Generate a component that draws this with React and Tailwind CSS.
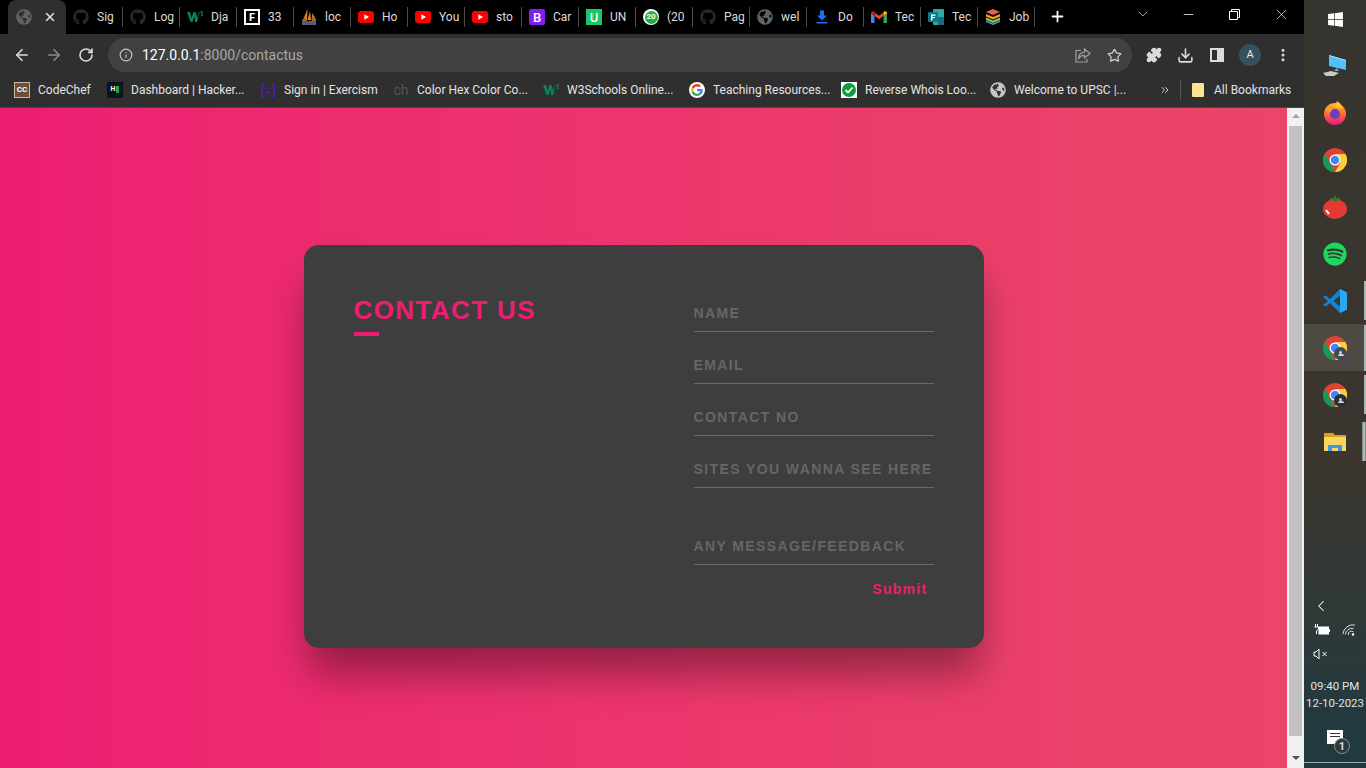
import { ArrowLeft, ArrowRight, RotateCw, Info, Star, Download, Puzzle, MoreVertical, Plus, X, ChevronDown, Minus, ChevronLeft, ChevronsRight } from "lucide-react";
import { FaGithub, FaGlobeAmericas, FaSpotify, FaWindows } from "react-icons/fa";

const ui = { fontFamily: 'Roboto, "Open Sans", sans-serif' };

function Globe({ size = 16, color = "#5f6368" }) {
    return <FaGlobeAmericas size={size} color={color} />;
}

function Github() {
    return <FaGithub size={16} color="#24292e" />;
}

function Yt() {
    return (
        <svg width="16" height="12" viewBox="0 0 16 12">
            <rect width="16" height="12" rx="3" fill="#f00" />
            <path d="M6.3 3.3 11 6l-4.7 2.7z" fill="#fff" />
        </svg>
    );
}

function Square({ bg, color = "#fff", children, className = "" }) {
    return (
        <span className={`flex h-4 w-4 items-center justify-center text-[13px] font-medium leading-none ${className}`} style={{ background: bg, color }}>
            {children}
        </span>
    );
}

function W3({ color = "#04aa6d" }) {
    return (
        <svg width="16" height="12" viewBox="0 0 16 12">
            <path d="M0 1h3l1.5 6L6.5 1h2l2 6L12 1h.8L10 11H8L7.500 5 5.500 11h-2z" fill={color} />
            <path d="M13 0.500h3v1l-1 1.200c.8.300 1 .8 1 1.300 0 1-1 1.500-2.500 1.200v-.8c1 .2 1.500 0 1.500-.5 0-.4-.5-.6-1-.6v-.7l1-1.100h-2z" fill={color} />
        </svg>
    );
}

function Pyramid() {
    return (
        <svg width="16" height="16" viewBox="0 0 16 16">
            <path d="M6.500 0 2 11h4zM9 2 6.500 11h3.500zM11.500 4 10.500 11H15z" fill="#e08a2c" />
            <path d="M4 8 0.500 12H6zM11 7l4.500 5H11z" fill="#a8651f" />
            <rect x="1" y="12" width="14" height="4" fill="#5a5a78" />
        </svg>
    );
}

function Gmail() {
    return (
        <svg width="16" height="12" viewBox="0 0 16 12">
            <path d="M0 2v9a1 1 0 0 0 1 1h2.500V5z" fill="#4285f4" />
            <path d="M16 2v9a1 1 0 0 1-1 1h-2.500V5z" fill="#34a853" />
            <path d="M3.500 5 8 8.300 12.500 5V1.500L8 4.800 3.500 1.500z" fill="#ea4335" />
            <path d="M0 2c0-1.500 1.800-2.400 3-1.500l.5.4V5L0 2.500z" fill="#c5221f" />
            <path d="M16 2c0-1.500-1.800-2.400-3-1.500l-.5.4V5L16 2.500z" fill="#fbbc04" />
        </svg>
    );
}

function Teams() {
    return (
        <svg width="16" height="16" viewBox="0 0 16 16">
            <rect x="5" y="0" width="11" height="16" rx="1" fill="#31a8a8" />
            <rect x="10" y="8" width="6" height="8" fill="#1b6f78" />
            <rect x="0" y="3" width="10" height="10" rx="1" fill="#0e7a86" />
            <path d="M3 5.500h4.500v1.200H4.500v1.200h2.500v1.200H4.500v2.400H3z" fill="#fff" />
        </svg>
    );
}

function Stack() {
    return (
        <svg width="16" height="16" viewBox="0 0 16 16">
            <path d="M8 0 15 3 8 6 1 3z" fill="#e8604c" />
            <path d="M1 5l7 3 7-3v2.500L8 10.500 1 7.500z" fill="#e9a23b" />
            <path d="M1 8.500l7 3 7-3V11l-7 3-7-3z" fill="#8bc34a" />
            <path d="M1 11.500l7 3 7-3V13l-7 3-7-3z" fill="#4aa3df" />
        </svg>
    );
}

function GoogleG({ size = 16 }) {
    return (
        <span className="flex items-center justify-center rounded-full bg-white" style={{ width: size, height: size }}>
            <svg width="12" height="12" viewBox="0 0 48 48">
                <path fill="#ea4335" d="M24 9.500c3.500 0 6.700 1.300 9.100 3.500l6.800-6.800C35.800 2.400 30.200 0 24 0 14.600 0 6.500 5.400 2.600 13.200l7.900 6.200C12.400 13.700 17.700 9.500 24 9.500z" />
                <path fill="#4285f4" d="M46.900 24.500c0-1.600-.1-3.100-.4-4.500H24v9h12.900c-.6 3-2.200 5.500-4.700 7.200l7.700 6c4.500-4.200 7-10.300 7-17.700z" />
                <path fill="#fbbc05" d="M10.500 28.600A14.500 14.500 0 0 1 9.500 24c0-1.600.3-3.200.8-4.600l-7.900-6.200A24 24 0 0 0 0 24c0 3.900.9 7.500 2.600 10.800z" />
                <path fill="#34a853" d="M24 48c6.500 0 11.900-2.100 15.900-5.800l-7.700-6c-2.200 1.500-4.900 2.300-8.200 2.300-6.300 0-11.600-4.200-13.500-9.900l-8 6.200C6.500 42.600 14.600 48 24 48z" />
            </svg>
        </span>
    );
}

function Chrome({ badge }) {
    return (
        <span className="relative flex h-6 w-6">
            <svg width="24" height="24" viewBox="0 0 48 48">
                <circle cx="24" cy="24" r="24" fill="#db4437" />
                <path d="M24 48A24 24 0 0 1 3.200 12L13.500 30 24 48z" fill="#0f9d58" />
                <path d="M24 48 35 29 24 12h20.800A24 24 0 0 1 24 48z" fill="#ffcd40" />
                <circle cx="24" cy="24" r="11" fill="#fff" />
                <circle cx="24" cy="24" r="8.500" fill="#4285f4" />
            </svg>
            {badge && (
                <span className={`absolute bottom-0 right-0 flex h-[13px] w-[13px] flex-col items-center justify-center rounded-full ${badge === "a" ? "bg-[#3f4b59]" : "bg-[#25303b]"}`}>
                    <span className="h-[3px] w-[3px] rounded-full bg-[#d5d5d5]" />
                    <span className="h-[2px] w-[6px] rounded-t-full bg-[#d5d5d5]" />
                </span>
            )}
        </span>
    );
}

const tabs = [
    { icon: <Github />, label: "Sig" },
    { icon: <Github />, label: "Log" },
    { icon: <W3 color="#0b8457" />, label: "Dja" },
    { icon: <span className="flex h-4 w-4 items-center justify-center border-2 border-white bg-black text-[11px] font-bold leading-none text-white">F</span>, label: "33" },
    { icon: <Pyramid />, label: "loc" },
    { icon: <Yt />, label: "Ho" },
    { icon: <Yt />, label: "You" },
    { icon: <Yt />, label: "sto" },
    { icon: <Square bg="#7f1ff0" className="rounded-[2px]">B</Square>, label: "Car" },
    { icon: <Square bg="#17c964">U</Square>, label: "UN" },
    {
        icon: (
            <span className="relative flex h-4 w-4 items-center justify-center rounded-full bg-white">
                <span className="flex h-[13px] w-[13px] items-center justify-center rounded-full bg-[#1fb141] text-[8px] font-bold text-white">20</span>
            </span>
        ),
        label: "(20",
    },
    { icon: <Github />, label: "Pag" },
    { icon: <Globe />, label: "wel" },
    {
        icon: (
            <svg width="16" height="16" viewBox="0 0 16 16">
                <path d="M6 1.500h4v5h3L8 11.500 3 6.500h3zM2.500 13h11v1.500h-11z" fill="#1a73e8" />
            </svg>
        ),
        label: "Do",
    },
    { icon: <Gmail />, label: "Tec" },
    { icon: <Teams />, label: "Tec" },
    { icon: <Stack />, label: "Job" },
];

const bookmarks = [
    { w: "w-[93px]", label: "CodeChef", icon: <span className="flex h-4 w-4 items-center justify-center border border-[#c9b9a6] bg-[#6b4f3a] text-[8px] font-bold text-white">CC</span> },
    { w: "w-[153px]", label: "Dashboard | Hacker...", icon: <span className="flex h-4 w-4 items-center justify-center gap-px bg-[#0e141e]"><span className="text-[7px] font-bold text-white">H</span><span className="h-[7px] w-[3px] bg-[#1ba94c]" /></span> },
    {
        w: "w-[133px]", label: "Sign in | Exercism",
        icon: (
            <svg width="16" height="16" viewBox="0 0 16 16" fill="none" stroke="#5b16d0" strokeWidth="1.300">
                <path d="M4 1.500H3c-1 0-1 1-1 2v2.500L.8 8 2 10v2.500c0 1 0 2 1 2h1M12 1.500h1c1 0 1 1 1 2v2.500L15.200 8 14 10v2.500c0 1 0 2-1 2h-1" />
                <path d="M5.500 6.500h1M9.500 6.500h1M6 10c1.200 1 2.800 1 4 0" />
            </svg>
        ),
    },
    { w: "w-[150px]", label: "Color Hex Color Co...", icon: <span className="flex h-4 w-4 items-center justify-center text-[14px] leading-none text-[#555]">ch</span> },
    { w: "w-[146px]", label: "W3Schools Online...", icon: <W3 color="#0b8457" /> },
    { w: "w-[152px]", label: "Teaching Resources...", icon: <GoogleG /> },
    {
        w: "w-[149px]", label: "Reverse Whois Loo...",
        icon: (
            <span className="flex h-4 w-4 items-center justify-center bg-white">
                <svg width="14" height="14" viewBox="0 0 14 14">
                    <circle cx="7" cy="7" r="7" fill="#0f9d3a" />
                    <path d="M3.500 7 6 9.500l4.500-5" stroke="#fff" strokeWidth="1.800" fill="none" />
                </svg>
            </span>
        ),
    },
    { w: "w-[151px]", label: "Welcome to UPSC |...", icon: <Globe color="#c4c7c5" /> },
];

const fields = ["NAME", "EMAIL", "CONTACT NO", "SITES YOU WANNA SEE HERE"];

function TabStrip() {
    return (
        <div className="flex h-[34px] items-stretch bg-black pl-2 text-[12px] text-[#dcdcdc]">
            <div className="flex w-[58px] items-center rounded-t-[8px] bg-[#2f2f2f] pl-2">
                <Globe />
                <X size={14} strokeWidth={2.5} className="ml-[11px] text-[#e4e4e4]" />
            </div>
            {tabs.map((t, i) => (
                <div key={i} className="flex w-[57px] items-center pl-[7px]">
                    <span className="flex w-4 shrink-0 justify-center">{t.icon}</span>
                    <span className="ml-2 w-[17px] whitespace-nowrap">{t.label}</span>
                    <span className="ml-[8px] h-5 w-px bg-[#4a4a4a]" />
                </div>
            ))}
            <Plus size={17} strokeWidth={2.5} className="ml-[14px] mt-[8px] text-white" />
            <ChevronDown size={16} strokeWidth={1.2} className="ml-[69px] mt-[6px] text-[#d0d0d0]" />
            <Minus size={15} strokeWidth={1.2} className="ml-[30px] mt-[7px] text-white" />
            <svg width="11" height="11" viewBox="0 0 11 11" className="ml-[33px] mt-[9px] text-white">
                <path d="M.5 2.500h8v8h-8zM2.500 2.500V.5h8v8h-2" fill="none" stroke="currentColor" />
            </svg>
            <X size={17} strokeWidth={1} className="ml-[33px] mt-[6px] text-white" />
        </div>
    );
}

function Toolbar() {
    return (
        <div className="flex h-[38px] items-end bg-[#2f2f2f] pl-[13px] text-[#dcdcdc]">
            <div className="flex h-[34px] items-center">
                <ArrowLeft size={18} strokeWidth={2.2} />
                <ArrowRight size={18} strokeWidth={2.2} className="ml-[14px] text-[#8a8a8a]" />
                <RotateCw size={16} strokeWidth={2.4} className="ml-[15px]" />
            </div>
            <div className="ml-[14px] flex h-[34px] w-[1024px] items-center rounded-full bg-[#414141] pl-[11px] text-[14px]">
                <Info size={14} className="text-[#c8c8c8]" />
                <span className="ml-[9px] leading-none">
                    <span className="text-white">127.0.0.1</span>
                    <span className="text-[#a8a8a8]">:8000/contactus</span>
                </span>
                <svg width="16" height="15" viewBox="0 0 16 15" fill="none" stroke="#a0a0a0" strokeWidth="1.200" className="ml-auto">
                    <path d="M6 2.500H1v11.500h11v-3" />
                    <path d="M9.500 1 15 5.500 9.500 10V7.300C6.500 7.300 4.500 8.500 3.500 11c0-4 2.500-6.500 6-6.800z" />
                </svg>
                <Star size={15} className="ml-[16px] mr-[10px] text-[#cfcfcf]" />
            </div>
            <div className="flex h-[34px] items-center">
                <Puzzle size={16} fill="#dcdcdc" className="ml-[14px]" />
                <Download size={17} strokeWidth={2.2} className="ml-[15px]" />
                <span className="ml-[16px] flex h-[14px] w-[14px] justify-end border-2 border-[#dcdcdc]">
                    <span className="h-full w-[5px] bg-[#dcdcdc]" />
                </span>
                <span className="ml-[15px] flex h-[22px] w-[22px] items-center justify-center rounded-full bg-[#37505f] text-[11px] text-[#e8e8e8]">A</span>
                <MoreVertical size={16} strokeWidth={2.5} className="ml-[14px]" />
            </div>
        </div>
    );
}

function BookmarkBar() {
    return (
        <div className="flex h-[36px] items-center border-b border-[#5a3a48] bg-[#2f2f2f] pl-[14px] text-[12px] text-[#e3e3e3]">
            {bookmarks.map((b) => (
                <div key={b.label} className={`flex items-center ${b.w}`}>
                    <span className="flex w-4 shrink-0 justify-center">{b.icon}</span>
                    <span className="ml-2 whitespace-nowrap">{b.label}</span>
                </div>
            ))}
            <ChevronsRight size={12} className="ml-[18px] text-[#cfcfcf]" />
            <span className="ml-[9px] h-5 w-px bg-[#555]" />
            <span className="ml-[11px] h-[14px] w-3 rounded-[1px] bg-[#fde293]" />
            <span className="ml-[10px] whitespace-nowrap">All Bookmarks</span>
        </div>
    );
}

function Scrollbar() {
    return (
        <div className="flex w-[17px] shrink-0 flex-col items-center bg-[#f1f1f1] pt-[6px]">
            <span className="h-0 w-0 border-x-4 border-b-4 border-x-transparent border-b-[#a3a3a3]" />
            <span className="mt-[8px] h-[610px] w-[13px] bg-[#c1c1c1]" />
            <span className="mt-[20px] h-0 w-0 border-x-4 border-t-4 border-x-transparent border-t-[#505050]" />
        </div>
    );
}

function ContactCard() {
    return (
        <div className="h-[403px] w-[680px] rounded-[15px] bg-[#3e3e3e] p-[50px] shadow-[0_30px_40px_-5px_rgba(0,0,0,0.38)]" style={{ fontFamily: '"Liberation Sans", Arial, sans-serif' }}>
            <div className="flex justify-between">
                <div>
                    <h2 className="text-[26px] font-bold leading-[30px] tracking-[1.4px] text-[#ee1d72]">CONTACT US</h2>
                    <div className="mt-[7px] h-[4px] w-[25px] bg-[#ee1d72]" />
                </div>
                <form className="w-[240px]">
                    {fields.map((f) => (
                        <input
                            key={f}
                            placeholder={f}
                            className="mb-[15px] block h-[37px] w-full border-b border-[#696969] bg-transparent pb-px text-[14px] font-bold tracking-[1.4px] text-white outline-none placeholder:text-[#666]"
                        />
                    ))}
                    <input
                        placeholder="ANY MESSAGE/FEEDBACK"
                        className="mt-[40px] block h-[37px] w-full border-b border-[#696969] bg-transparent pb-px text-[14px] font-bold tracking-[1.4px] text-white outline-none placeholder:text-[#666]"
                    />
                    <div className="mt-[15px] flex justify-end pr-[6px]">
                        <button type="button" className="text-[14px] font-bold leading-[18px] tracking-[1.3px] text-[#ee1d72]">Submit</button>
                    </div>
                </form>
            </div>
        </div>
    );
}

function TaskIcon({ children, active, bar }) {
    return (
        <div className={`relative flex h-[47px] items-center justify-center ${active ? "bg-white/10" : ""}`}>
            {children}
            {bar === "full" && <span className="absolute bottom-0 right-0 top-px w-[2px] bg-[#a9bbae]" />}
            {bar === "short" && <span className="absolute bottom-[4px] right-0 top-[4px] w-[2px] bg-[#a9bbae]" />}
            {bar === "double" && <span className="absolute bottom-[4px] right-0 top-[4px] w-[4px] border-x border-[#7f8f85] bg-[#a9bbae]" />}
        </div>
    );
}

function Taskbar() {
    return (
        <div className="flex w-[62px] shrink-0 flex-col bg-gradient-to-b from-[#36342f] via-[#3b362e] via-60% to-[#1e3a40] text-white" style={ui}>
            <div className="flex h-[42px] items-center justify-center pb-[4px]">
                <FaWindows size={17} />
            </div>
            <TaskIcon>
                <svg width="24" height="22" viewBox="0 0 24 22">
                    <path d="M6 0l17 5v10L6 11z" fill="#4fc3f7" />
                    <path d="M6 0l17 5v1L6 1z" fill="#9be3ff" />
                    <path d="M14 13l2 3-5 0z" fill="#8fa3ad" />
                    <path d="M0 18l8-2 8 2-5 3H3z" fill="#c9c9c9" />
                </svg>
            </TaskIcon>
            <TaskIcon>
                <svg width="24" height="24" viewBox="0 0 24 24">
                    <defs>
                        <linearGradient id="ff" x1="0" y1="0" x2="0" y2="1">
                            <stop offset="0" stopColor="#ffbd2e" />
                            <stop offset="0.5" stopColor="#ff6a2b" />
                            <stop offset="1" stopColor="#e31587" />
                        </linearGradient>
                    </defs>
                    <circle cx="12" cy="13" r="11" fill="url(#ff)" />
                    <path d="M14 0c4 3 5 5 5 8l-7-2z" fill="#ffc83a" />
                    <circle cx="12" cy="13" r="5" fill="#6a3fc0" />
                    <path d="M2 8c2-3 5-4 7-3-1 2-2 3-1 6-3 0-5-1-6-3z" fill="#ff9a2b" />
                </svg>
            </TaskIcon>
            <TaskIcon><Chrome /></TaskIcon>
            <TaskIcon>
                <svg width="24" height="24" viewBox="0 0 24 24">
                    <ellipse cx="12" cy="14" rx="12" ry="10" fill="#e53935" />
                    <path d="M12 1v4M7 4h10l-5 2z" stroke="#2e7d32" strokeWidth="1.500" fill="#2e7d32" />
                    <path d="M3 15l3 4" stroke="#fff" strokeWidth="2" />
                </svg>
            </TaskIcon>
            <TaskIcon><FaSpotify size={24} color="#1ed760" /></TaskIcon>
            <TaskIcon bar="short">
                <svg width="24" height="24" viewBox="0 0 24 24">
                    <path d="M17 0l7 3.500v17L17 24 7 14l-4.500 3.500L0 16l5-4-5-4 2.500-1.500L7 10z" fill="#0e86d4" />
                    <path d="M17 0l7 3.500v17L17 24V0z" fill="#2aa7ee" />
                    <path d="M17 6.500 10.500 12l6.500 5.500z" fill="#3c3630" />
                </svg>
            </TaskIcon>
            <TaskIcon active bar="full"><Chrome badge="a" /></TaskIcon>
            <TaskIcon bar="short"><Chrome badge="b" /></TaskIcon>
            <TaskIcon bar="double">
                <svg width="22" height="18" viewBox="0 0 22 18">
                    <path d="M0 0h9l2 2h11v16H0z" fill="#d9a21b" />
                    <path d="M0 4h22v14H0z" fill="#fcd462" />
                    <path d="M4 18v-6h14v6h-4v-3H8v3z" fill="#3f97dd" />
                </svg>
            </TaskIcon>
            <div className="mt-auto flex flex-col items-center pb-[5px]">
                <ChevronLeft size={18} strokeWidth={1.4} className="mr-[28px]" />
                <div className="mt-[8px] flex items-center gap-[12px] pr-[1px]">
                    <svg width="16" height="12" viewBox="0 0 16 12" fill="none" stroke="#fff">
                        <path d="M1.500 0v3M3.500 0v3M.5 3h4v2L2.500 7v3" />
                        <rect x="5" y="3" width="9.500" height="7" fill="#fff" />
                        <path d="M15.500 5v3" />
                    </svg>
                    <svg width="14" height="13" viewBox="0 0 14 13" fill="none" stroke="#ddd">
                        <path d="M1 11a10 10 0 0 1 12-9M3.500 11.500a6.500 6.500 0 0 1 8-6M6.500 12a3 3 0 0 1 5-3" />
                        <circle cx="11" cy="11.500" r="1.200" fill="#fff" stroke="none" />
                    </svg>
                </div>
                <div className="mt-[12px] flex items-center self-start pl-[9px]">
                    <svg width="16" height="12" viewBox="0 0 16 12" fill="none" stroke="#fff">
                        <path d="M1 4v4h2l3 3V1L3 4zM9.500 4l4 4M13.500 4l-4 4" />
                    </svg>
                </div>
                <div className="mt-[18px] whitespace-nowrap text-center text-[11.5px] leading-[17px] text-[#e2e2e2]">
                    09:40 PM
                    <br />
                    12-10-2023
                </div>
                <div className="relative mt-[18px] h-[14px] w-[16px] bg-white">
                    <span className="absolute left-[3px] top-[3px] h-px w-[10px] bg-[#2a3a3f]" />
                    <span className="absolute left-[3px] top-[6px] h-px w-[10px] bg-[#2a3a3f]" />
                    <span className="absolute -bottom-[10px] -right-[7px] flex h-[16px] w-[16px] items-center justify-center rounded-full border border-[#8a8a8a] bg-[#2a3a3f] text-[11px] font-bold leading-none text-[#ddd]">1</span>
                </div>
                <div className="mt-[18px] h-px w-full bg-[#9aa5a5]" />
            </div>
        </div>
    );
}

export default function App() {
    return (
        <div className="flex h-screen w-full overflow-hidden">
            <div className="flex min-w-0 flex-1 flex-col" style={ui}>
                <TabStrip />
                <Toolbar />
                <BookmarkBar />
                <div className="flex min-h-0 flex-1">
                    <div className="flex flex-1 justify-center bg-gradient-to-r from-[#ee1d72] to-[#ea4668] pt-[137px]">
                        <ContactCard />
                    </div>
                    <Scrollbar />
                </div>
            </div>
            <Taskbar />
        </div>
    );
}
